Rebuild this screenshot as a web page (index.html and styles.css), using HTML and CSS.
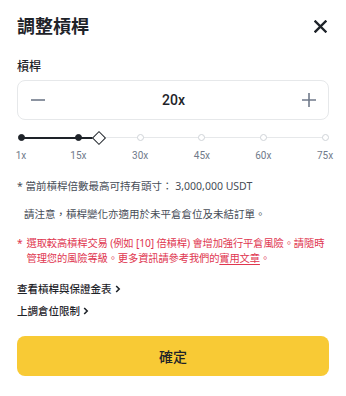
FILE: index.html
```html
<!DOCTYPE html>
<html lang="zh-Hant">
<head>
<meta charset="utf-8">
<link rel="stylesheet" href="styles.css">
</head>
<body>
<div class="modal">
  <div class="header">
    <h1 class="title">調整槓桿</h1>
    <svg class="close" width="13" height="13" viewBox="0 0 13 13"><path d="M1.5 1.5L11.5 11.5M11.5 1.5L1.5 11.5" stroke="#1e2329" stroke-width="2.4" stroke-linecap="square"/></svg>
  </div>
  <div class="label">槓桿</div>
  <div class="stepper">
    <svg width="14" height="14" viewBox="0 0 14 14"><path d="M0 7H14" stroke="#707a8a" stroke-width="1.6"/></svg>
    <span class="value">20x</span>
    <svg width="14" height="14" viewBox="0 0 14 14"><path d="M0 7H14M7 0V14" stroke="#707a8a" stroke-width="1.6"/></svg>
  </div>
  <div class="slider">
    <div class="track"></div>
    <div class="fill" style="width:25.7%"></div>
    <span class="dot on" style="left:0%"></span>
    <span class="dot on" style="left:18.9%"></span>
    <span class="dot" style="left:39.2%"></span>
    <span class="dot" style="left:59.5%"></span>
    <span class="dot" style="left:79.7%"></span>
    <span class="dot" style="left:100%"></span>
    <span class="thumb" style="left:25.7%"></span>
    <span class="tick" style="left:0%">1x</span>
    <span class="tick" style="left:18.9%">15x</span>
    <span class="tick" style="left:39.2%">30x</span>
    <span class="tick" style="left:59.5%">45x</span>
    <span class="tick" style="left:79.7%">60x</span>
    <span class="tick" style="left:100%">75x</span>
  </div>
  <p class="note">* 當前槓桿倍數最高可持有頭寸： 3,000,000 USDT</p>
  <p class="note indent">請注意，槓桿變化亦適用於未平倉倉位及未結訂單。</p>
  <div class="warn"><span class="star">*</span><span>選取較高槓桿交易 (例如 [10] 倍槓桿) 會增加強行平倉風險。請隨時管理您的風險等級。更多資訊請參考我們的<u>實用文章</u>。</span></div>
  <a class="link">查看槓桿與保證金表 <svg width="6" height="8" viewBox="0 0 6 8"><path d="M1.2 1L4.2 4L1.2 7" fill="none" stroke="#1e2329" stroke-width="1.6"/></svg></a>
  <a class="link">上調倉位限制 <svg width="6" height="8" viewBox="0 0 6 8"><path d="M1.2 1L4.2 4L1.2 7" fill="none" stroke="#1e2329" stroke-width="1.6"/></svg></a>
  <button class="confirm">確定</button>
</div>
</body>
</html>
```
FILE: styles.css
```css
* { box-sizing: border-box; }
html, body { margin: 0; padding: 0; background: #fff; }
body {
  font-family: "Noto Sans", "Noto Sans CJK TC", sans-serif;
  color: #1e2329;
  width: 346px;
  height: 396px;
  overflow: hidden;
}
.modal { padding: 13px 17px 0 17px; display: flex; flex-direction: column; }
.header { display: flex; justify-content: space-between; align-items: center; height: 26px; }
.title { margin: 0; font-size: 18px; font-weight: 700; line-height: 26px; }
.close { margin-right: 2px; }
.label { margin-top: 20px; font-size: 12px; font-weight: 500; line-height: 16px; }
.stepper {
  margin-top: 5px; height: 40px; border: 1px solid #e6e8ea; border-radius: 8px;
  display: flex; align-items: center; justify-content: space-between; padding: 0 12px 0 13px;
}
.value { font-family: "Roboto", "Noto Sans", sans-serif; font-size: 14px; font-weight: 500; }
.slider { position: relative; margin: 12px 4px 0 4px; height: 34px; }
.track { position: absolute; left: 0; right: 0; top: 5px; height: 1px; background: #e6e8ea; }
.fill { position: absolute; left: 0; top: 5px; height: 1.5px; background: #1e2329; }
.dot {
  position: absolute; top: 2px; width: 7px; height: 7px; margin-left: -3.5px;
  border-radius: 50%; background: #fff; border: 1px solid #cfd3d8;
}
.dot.on { background: #1e2329; border-color: #1e2329; }
.thumb {
  position: absolute; top: 0.5px; width: 10px; height: 10px; margin-left: -5px;
  background: #fff; border: 1.5px solid #1e2329; transform: rotate(45deg);
}
.tick {
  position: absolute; top: 18px; transform: translateX(-50%);
  font-family: "Roboto", "Noto Sans", sans-serif; font-size: 10px; color: #707a8a; line-height: 12px;
}
.note { margin: 0; font-size: 10.5px; color: #474d57; line-height: 15px; }
.note:first-of-type { margin-top: 13px; }
.note.indent { margin-top: 13px; padding-left: 7px; }
.warn { margin-top: 14px; display: flex; gap: 4px; font-size: 10.3px; letter-spacing: -0.15px; line-height: 15px; color: #e0364f; }
.warn u { text-decoration-thickness: 1px; text-underline-offset: 2px; }
.link { margin-top: 15px; font-size: 10.5px; font-weight: 500; line-height: 16px; color: #1e2329; display: flex; align-items: center; gap: 3px; }
.link + .link { margin-top: 6px; }
.confirm {
  margin-top: 17px; height: 40px; width: 100%; border: 0; border-radius: 8px;
  background: #f8ca35; font-family: inherit; font-size: 14px; font-weight: 500; color: #1e2329;
}
```
